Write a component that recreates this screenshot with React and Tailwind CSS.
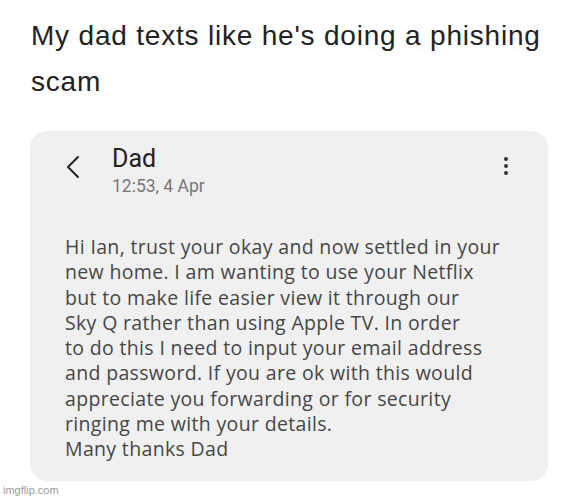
import React from 'react';

const lines = [
    'Hi Ian, trust your okay and now settled in your',
    'new home. I am wanting to use your Netflix',
    'but to make life easier view it through our',
    'Sky Q rather than using Apple TV. In order',
    'to do this I need to input your email address',
    'and password. If you are ok with this would',
    'appreciate you forwarding or for security',
    'ringing me with your details.',
    'Many thanks Dad',
];

export default function App() {
    return (
        <div className="relative w-[564px] h-[500px] bg-white overflow-hidden">
            <h1 className="pl-[31px] pt-[13px] text-[28px] leading-[46px] tracking-[0.8px] text-[#222] font-normal" style={{ fontFamily: '"Liberation Sans", Arial, sans-serif' }}>
                My dad texts like he's doing a phishing
                <br />
                scam
            </h1>

            <div className="ml-[30px] mt-[26px] w-[518px] h-[350px] rounded-[17px] bg-[#f0f0f0]" style={{ fontFamily: 'Roboto, "Liberation Sans", sans-serif' }}>
                <div className="flex items-start pt-[13px] pl-[35px] pr-[40px]">
                    <svg className="mt-[11px] text-[#222]" width="16" height="24" viewBox="0 0 16 24" fill="none" stroke="currentColor" strokeWidth="2" strokeLinecap="round" strokeLinejoin="round">
                        <polyline points="13 2 3 12 13 22" />
                    </svg>
                    <div className="ml-[31px] flex-1">
                        <div className="text-[25px] leading-[30px] text-[#222]">Dad</div>
                        <div className="text-[17.5px] leading-[24px] text-[#777]">12:53, 4 Apr</div>
                    </div>
                    <div className="mt-[13px] flex flex-col gap-[3px]">
                        <span className="block w-[4px] h-[4px] rounded-full bg-[#333]" />
                        <span className="block w-[4px] h-[4px] rounded-full bg-[#333]" />
                        <span className="block w-[4px] h-[4px] rounded-full bg-[#333]" />
                    </div>
                </div>

                <div className="pl-[35px] pt-[36px] text-[19.5px] leading-[25.3px] tracking-[0.34px] text-[#464646]" style={{ fontFamily: '"Open Sans", Roboto, sans-serif' }}>
                    {lines.map((line, i) => (
                        <div key={i}>{line}</div>
                    ))}
                </div>
            </div>

            <div className="absolute left-[3px] bottom-[2px] text-[11px] text-[#999]" style={{ fontFamily: '"Liberation Sans", sans-serif' }}>
                imgflip.com
            </div>
        </div>
    );
}
